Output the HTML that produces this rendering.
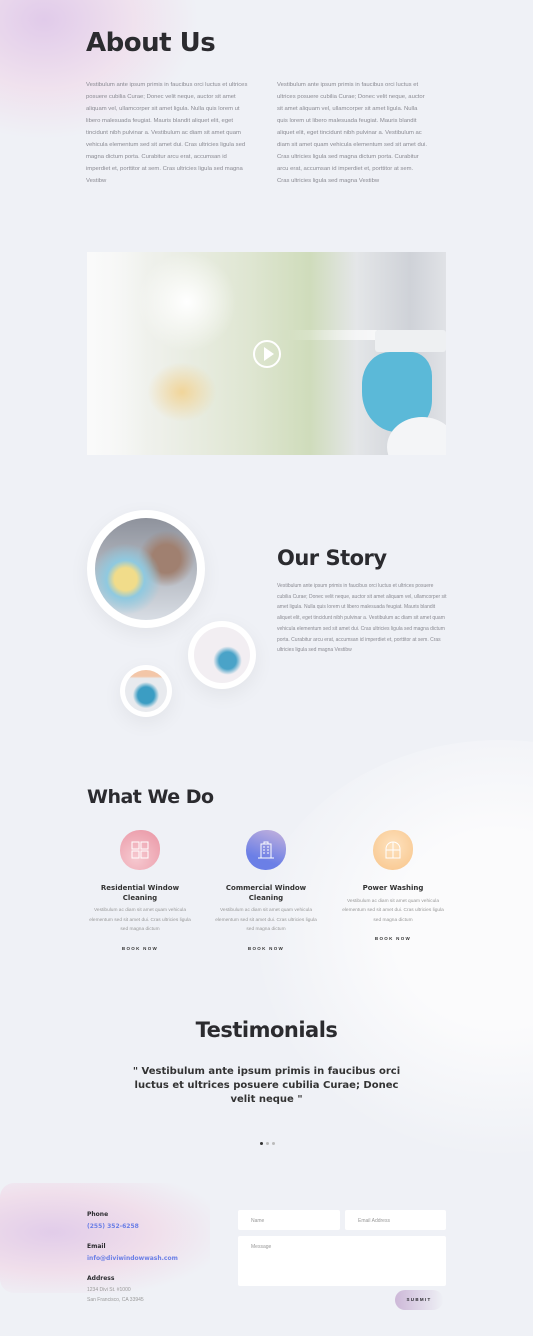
<!DOCTYPE html>
<html><head><meta charset="utf-8"><style>
*{margin:0;padding:0;box-sizing:border-box}
body{width:533px;height:1336px;background:#eff1f6;font-family:"Liberation Sans",sans-serif;position:relative;overflow:hidden;color:#2b2b2f}
.a{position:absolute}
h1,h2{font-family:"DejaVu Sans","Liberation Sans",sans-serif;font-weight:bold;color:#2b2b2f;position:absolute;letter-spacing:-0.5px}
.p{font-size:5.9px;line-height:12px;color:#8a8a92;position:absolute}
.sv h3{font-family:"DejaVu Sans",sans-serif;font-size:7px;font-weight:bold;text-align:center;line-height:9.5px;color:#333}
.sv .d{font-size:4.8px;line-height:9.5px;color:#999;text-align:center;margin-top:3px}
.sv .b{font-size:4.5px;font-weight:bold;letter-spacing:1.3px;text-align:center;margin-top:11px;color:#333}
.blob{width:40px;height:40px;border-radius:50% 45% 50% 48%;margin:0 auto 14px;position:relative}
.blob svg{position:absolute;left:11px;top:11px}
.circ{position:absolute;border-radius:50%;background:#fff;box-shadow:0 6px 20px rgba(0,0,0,.06)}
.circ div{position:absolute;border-radius:50%}
.f{position:absolute;background:#fff;border:none;border-radius:2px;font-size:5px;color:#999;padding:8px 13px}
</style></head><body>
<div class="a" style="left:-60px;top:-60px;width:260px;height:200px;background:radial-gradient(ellipse at 40% 40%,rgba(220,190,230,.75),rgba(240,210,230,.5) 40%,rgba(239,241,246,0) 70%)"></div>
<h1 style="left:86px;top:28px;font-size:26px">About Us</h1>
<div class="p" style="left:86px;top:79px;width:166px">Vestibulum ante ipsum primis in faucibus orci luctus et ultrices posuere cubilia Curae; Donec velit neque, auctor sit amet aliquam vel, ullamcorper sit amet ligula. Nulla quis lorem ut libero malesuada feugiat. Mauris blandit aliquet elit, eget tincidunt nibh pulvinar a. Vestibulum ac diam sit amet quam vehicula elementum sed sit amet dui. Cras ultricies ligula sed magna dictum porta. Curabitur arcu erat, accumsan id imperdiet et, porttitor at sem. Cras ultricies ligula sed magna Vestibw</div>
<div class="p" style="left:277px;top:79px;width:150px">Vestibulum ante ipsum primis in faucibus orci luctus et ultrices posuere cubilia Curae; Donec velit neque, auctor sit amet aliquam vel, ullamcorper sit amet ligula. Nulla quis lorem ut libero malesuada feugiat. Mauris blandit aliquet elit, eget tincidunt nibh pulvinar a. Vestibulum ac diam sit amet quam vehicula elementum sed sit amet dui. Cras ultricies ligula sed magna dictum porta. Curabitur arcu erat, accumsan id imperdiet et, porttitor at sem. Cras ultricies ligula sed magna Vestibw</div>

<div class="a" style="left:87px;top:252px;width:359px;height:203px;overflow:hidden;background:linear-gradient(90deg,#f6f7f7 0%,#eef0ea 20%,#dfe6d2 45%,#cfdcbb 62%,#e4e6e8 75%,#cfd2d8 90%,#e0e2e6 100%)">
 <div class="a" style="left:60px;top:110px;width:70px;height:60px;background:radial-gradient(#f1d59a,rgba(241,213,154,0) 70%)"></div>
 <div class="a" style="left:50px;top:0;width:100px;height:100px;background:radial-gradient(#fff,rgba(255,255,255,0) 70%)"></div>
 <div class="a" style="left:0;top:0;width:60px;height:203px;background:linear-gradient(90deg,#fafafa,rgba(250,250,250,0))"></div>
 <div class="a" style="left:200px;top:78px;width:90px;height:10px;background:linear-gradient(90deg,rgba(255,255,255,0),rgba(255,255,255,.8))"></div>
 <div class="a" style="left:288px;top:78px;width:71px;height:22px;background:#eef0f2;border-radius:3px"></div>
 <div class="a" style="left:275px;top:100px;width:70px;height:80px;background:#5bb9d8;border-radius:40% 30% 40% 50%"></div>
 <div class="a" style="left:300px;top:165px;width:70px;height:60px;background:#f4f5f7;border-radius:50%"></div>
 <div class="a" style="left:166px;top:88px;width:28px;height:28px;border:2px solid #fff;border-radius:50%"></div>
 <div class="a" style="left:177px;top:95px;width:0;height:0;border-left:10px solid #fff;border-top:7px solid transparent;border-bottom:7px solid transparent"></div>
</div>

<div class="circ" style="left:87px;top:510px;width:118px;height:118px"><div style="left:8px;top:8px;width:102px;height:102px;background:radial-gradient(circle at 30% 60%,#f1dc8a 0 12%,#8fc9e0 20%,rgba(143,201,224,0) 38%),radial-gradient(circle at 70% 40%,#a08070 0 15%,rgba(160,128,112,0) 30%),linear-gradient(#8e929c,#d8dde4)"></div></div>
<div class="circ" style="left:188px;top:621px;width:68px;height:68px"><div style="left:6px;top:6px;width:56px;height:56px;background:radial-gradient(circle at 60% 60%,#4aa3c8 0 18%,rgba(74,163,200,0) 30%),#f2eef2"></div></div>
<div class="circ" style="left:120px;top:665px;width:52px;height:52px"><div style="left:5px;top:5px;width:42px;height:42px;background:radial-gradient(circle at 50% 60%,#3b9dc3 0 25%,rgba(59,157,195,0) 40%),linear-gradient(#f3c6a8 0 15%,#e8eaee 20%)"></div></div>
<h1 style="left:277px;top:546px;font-size:21px">Our Story</h1>
<div class="p" style="left:277px;top:581px;width:172px;font-size:5px;line-height:10.7px">Vestibulum ante ipsum primis in faucibus orci luctus et ultrices posuere cubilia Curae; Donec velit neque, auctor sit amet aliquam vel, ullamcorper sit amet ligula. Nulla quis lorem ut libero malesuada feugiat. Mauris blandit aliquet elit, eget tincidunt nibh pulvinar a. Vestibulum ac diam sit amet quam vehicula elementum sed sit amet dui. Cras ultricies ligula sed magna dictum porta. Curabitur arcu erat, accumsan id imperdiet et, porttitor at sem. Cras ultricies ligula sed magna Vestibw</div>

<div class="a" style="left:250px;top:740px;width:500px;height:420px;border-radius:50%;background:radial-gradient(ellipse at 50% 45%,#fbfbfc 30%,rgba(248,249,251,0) 70%)"></div>
<h1 style="left:87px;top:786px;font-size:19px">What We Do</h1>
<div class="a sv" style="left:87px;top:830px;width:106px"><div class="blob" style="background:radial-gradient(circle at 40% 70%,#f6c9d0,#e994a3)"><svg width="18" height="18" viewBox="0 0 18 18" fill="none" stroke="#fff" stroke-width="1"><rect x="1" y="1" width="7" height="7"/><rect x="10" y="1" width="7" height="7"/><rect x="1" y="10" width="7" height="7"/><rect x="10" y="10" width="7" height="7"/></svg></div><h3>Residential Window Cleaning</h3><div class="d">Vestibulum ac diam sit amet quam vehicula elementum sed sit amet dui. Cras ultricies ligula sed magna dictum</div><div class="b">BOOK NOW</div></div>
<div class="a sv" style="left:213px;top:830px;width:106px"><div class="blob" style="background:linear-gradient(200deg,#c6b3dc,#6b7fe6 70%)"><svg width="18" height="18" viewBox="0 0 18 18" fill="none" stroke="#fff" stroke-width="1"><rect x="4" y="3" width="10" height="14"/><path d="M1 17h16M6 6h2M10 6h2M6 9h2M10 9h2M6 12h2M10 12h2M7 3V1h4v2"/></svg></div><h3>Commercial Window Cleaning</h3><div class="d">Vestibulum ac diam sit amet quam vehicula elementum sed sit amet dui. Cras ultricies ligula sed magna dictum</div><div class="b">BOOK NOW</div></div>
<div class="a sv" style="left:340px;top:830px;width:106px"><div class="blob" style="background:radial-gradient(circle at 50% 40%,#fde2bf,#f8c489)"><svg width="18" height="18" viewBox="0 0 18 18" fill="none" stroke="#fff" stroke-width="1"><path d="M2 17V8a7 7 0 0 1 14 0v9z"/><path d="M9 1v16M2 9h14"/></svg></div><h3>Power Washing</h3><div class="d">Vestibulum ac diam sit amet quam vehicula elementum sed sit amet dui. Cras ultricies ligula sed magna dictum</div><div class="b">BOOK NOW</div></div>

<h1 style="left:0;width:533px;text-align:center;top:1018px;font-size:21px">Testimonials</h1>
<div class="a" style="left:130px;width:273px;top:1065px;text-align:center;font-family:'DejaVu Sans',sans-serif;font-weight:bold;font-size:10px;line-height:14px;color:#333">" Vestibulum ante ipsum primis in faucibus orci luctus et ultrices posuere cubilia Curae; Donec velit neque "</div>
<div class="a" style="left:260px;top:1142px;width:3px;height:3px;border-radius:50%;background:#333"></div>
<div class="a" style="left:266px;top:1142px;width:3px;height:3px;border-radius:50%;background:#bbb"></div>
<div class="a" style="left:272px;top:1142px;width:3px;height:3px;border-radius:50%;background:#bbb"></div>

<div class="a" style="left:0;top:1183px;width:210px;height:110px;border-radius:14px;background:radial-gradient(ellipse at 25% 45%,rgba(222,195,230,.8),rgba(240,210,228,.6) 45%,rgba(239,241,246,0) 80%)"></div>
<div class="a" style="left:87px;top:1210px;font-family:'DejaVu Sans',sans-serif;font-size:6px;line-height:10px">
<b>Phone</b><div style="color:#6b7fe6;font-weight:bold;margin-top:2px">(255) 352-6258</div>
<b style="display:block;margin-top:10px">Email</b><div style="color:#6b7fe6;font-weight:bold;margin-top:2px">info@diviwindowwash.com</div>
<b style="display:block;margin-top:10px">Address</b><div style="color:#999;font-size:5px;margin-top:1px;font-family:'Liberation Sans',sans-serif">1234 Divi St. #1000<br>San Francisco, CA 33945</div></div>
<div class="f" style="left:238px;top:1210px;width:102px;height:20px">Name</div>
<div class="f" style="left:345px;top:1210px;width:101px;height:20px">Email Address</div>
<div class="f" style="left:238px;top:1236px;width:208px;height:50px">Message</div>
<div class="a" style="left:395px;top:1290px;width:48px;height:20px;border-radius:10px;background:linear-gradient(90deg,#cdb8d8,#eef0f5);font-size:4.5px;font-weight:bold;letter-spacing:1.3px;line-height:20px;text-align:center">SUBMIT</div>
</body></html>
